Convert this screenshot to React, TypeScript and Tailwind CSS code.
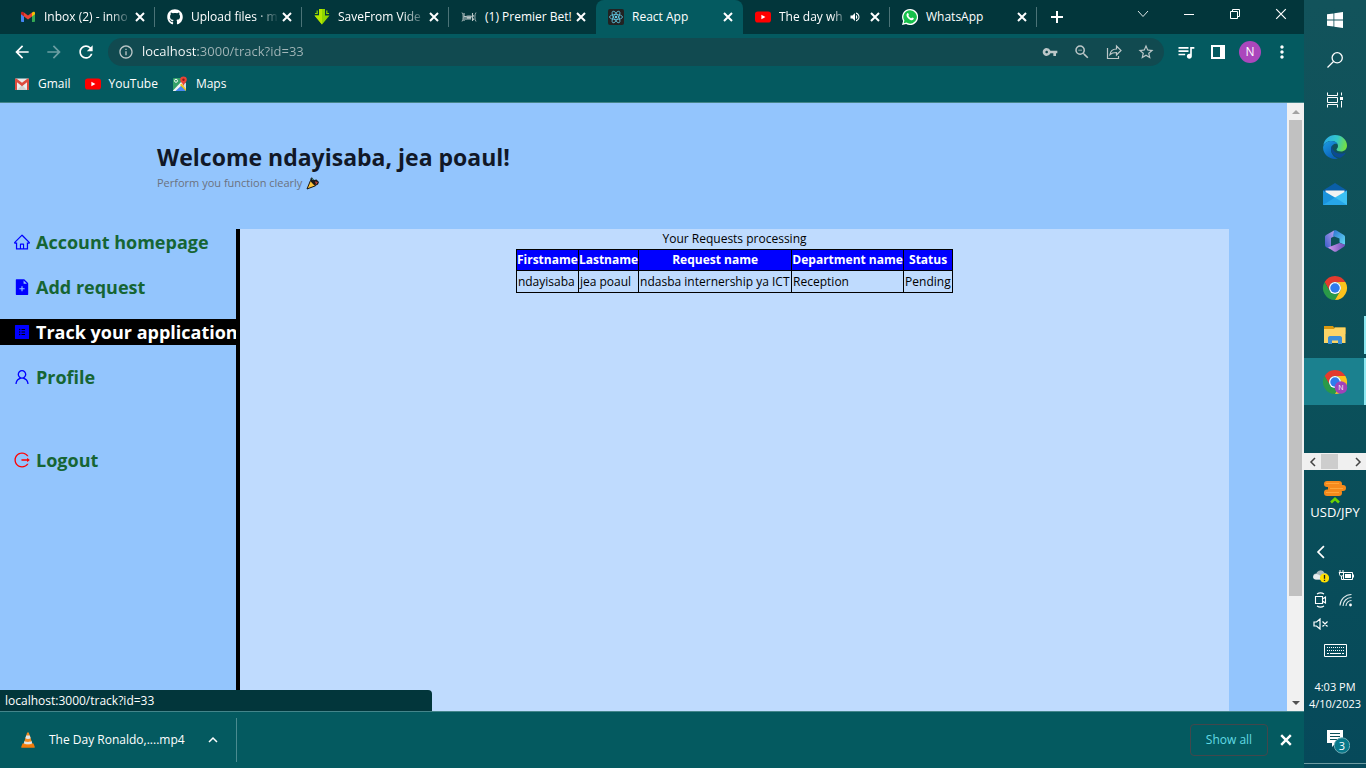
import type { ReactNode } from 'react'
import {
  AiFillFileAdd,
  AiFillProfile,
  AiOutlineHome,
  AiOutlineLogout,
  AiOutlineUser,
} from 'react-icons/ai'
import {
  MdArrowBack,
  MdArrowForward,
  MdInfoOutline,
  MdMoreVert,
  MdOutlineZoomOut,
  MdQueueMusic,
  MdRefresh,
  MdStarBorder,
  MdVolumeUp,
  MdVpnKey,
} from 'react-icons/md'
import { FaGithub } from 'react-icons/fa'

/* ---------- Site and app icons ---------- */

function GmailIcon() {
  return (
    <svg viewBox="0 0 16 16" className="size-4 shrink-0">
      <path d="M1 4v8.2c0 .5.4.8.8.8H4V6.500z" fill="#4285f4" />
      <path d="M15 4v8.200c0 .5-.4.8-.8.8H12V6.500z" fill="#34a853" />
      <path d="M12 3.600 13 2.900c.9-.6 2 0 2 1.100v1.200L12 7.500z" fill="#fbbc04" />
      <path d="M4 3.600 3 2.900C2.100 2.300 1 2.900 1 4v1.200l3 2.300z" fill="#c5221f" />
      <path d="M4 3.600 8 6.600l4-3v3.900l-4 3-4-3z" fill="#ea4335" />
    </svg>
  )
}

function EnvelopeIcon() {
  return (
    <svg viewBox="0 0 16 16" className="size-4 shrink-0">
      <rect x="1" y="2.500" width="14" height="11.500" rx="1" fill="#ececec" />
      <path d="M3 14 8 9l5 5z" fill="#d3d3d3" />
      <path d="M1 3.500v10c0 .3.300.5.6.5H3V6.200l5 4 5-4V14h1.400c.3 0 .6-.2.6-.5v-10c0-.9-1-1.300-1.700-.8L8 6.800 2.700 2.700C2 2.200 1 2.600 1 3.500z" fill="#dd4b3e" />
    </svg>
  )
}

function YouTubeIcon() {
  return (
    <svg viewBox="0 0 16 16" className="size-4 shrink-0">
      <rect x="0" y="2.500" width="16" height="11" rx="2.800" fill="#ff0000" />
      <path d="M6.400 5.700v4.600l4-2.300z" fill="#fff" />
    </svg>
  )
}

function MapsIcon() {
  return (
    <svg viewBox="0 0 16 16" className="size-4 shrink-0">
      <rect x="1" y="2" width="13" height="13" rx="1" fill="#34a069" />
      <path d="m1.500 15 6-6.500L14 15z" fill="#4a89f3" />
      <path d="m1 14.500 9.500-10 2 2L3.500 15H1z" fill="#f3f3f3" />
      <path d="m9 8 5-1v7.500z" fill="#d8dbe0" />
      <path d="m8 9 1.500-1.500L14 13v2z" fill="#fbc515" />
      <circle cx="4" cy="4.800" r="1.500" fill="none" stroke="#fff" strokeWidth=".9" />
      <path d="M11.500.5A3.300 3.300 0 0 0 8.200 3.800c0 2.400 2.600 3.200 3.300 6.200.7-3 3.300-3.800 3.300-6.200A3.300 3.300 0 0 0 11.500.5z" fill="#e94335" />
      <circle cx="11.500" cy="3.800" r="1.200" fill="#8c1d13" />
    </svg>
  )
}

function SaveFromIcon() {
  return (
    <svg viewBox="0 0 16 16" className="size-4 shrink-0">
      <path d="M5 0h6v6.500h4.500L8 15.500.5 6.500H5z" fill="#8fd400" />
      <path d="M5 0h3v15.500L.5 6.500H5z" fill="#b4e600" />
      <path d="M1 4.500h2.800M12.200 4.500H15M3.200 1.500v3M12.800 1.500v3" stroke="#8fd400" strokeWidth="1.200" />
    </svg>
  )
}

function PremierIcon() {
  return (
    <svg viewBox="0 0 16 16" className="size-4 shrink-0" fill="none" stroke="#b9c6c7">
      <path d="M1 3.500c1.500 2 1.500 7 0 9M15 3.500c-1.500 2-1.500 7 0 9" strokeWidth=".8" />
      <path d="M3 4v8M3 7.500h2V11M6 6.500l1 4 1-4 1 4 1-4M11.500 4v8M13 6.500l-2 1.500 2 3" strokeWidth="1.100" />
    </svg>
  )
}

function ReactIcon() {
  return (
    <svg viewBox="0 0 16 16" className="size-4 shrink-0">
      <rect width="16" height="16" rx="2" fill="#222" />
      <g fill="none" stroke="#61c9e4" strokeWidth=".8">
        <ellipse cx="8" cy="8" rx="6.500" ry="2.500" />
        <ellipse cx="8" cy="8" rx="6.500" ry="2.500" transform="rotate(60 8 8)" />
        <ellipse cx="8" cy="8" rx="6.500" ry="2.500" transform="rotate(120 8 8)" />
      </g>
      <circle cx="8" cy="8" r="1.300" fill="#61c9e4" />
    </svg>
  )
}

function WhatsAppIcon() {
  return (
    <svg viewBox="0 0 16 16" className="size-4 shrink-0">
      <path d="M8 0a8 8 0 0 0-6.900 12L0 16l4.100-1.100A8 8 0 1 0 8 0z" fill="#fff" />
      <path d="M8 1.300a6.700 6.700 0 0 0-5.600 10.300l-.7 2.700 2.800-.7A6.700 6.700 0 1 0 8 1.300z" fill="#16c04b" />
      <path d="M5.400 4.200c.4-.2.800-.1.900.2l.6 1.300c.1.300-.5.900-.6 1.100.6 1.200 1.500 2 2.700 2.500.3-.1.900-1 1.100-.9l1.500.7c.4.300 0 1.400-.5 1.700-1.200.8-2.900.1-4.200-.9C5.400 8.700 4.400 7.300 4.500 6c0-.8.500-1.500.9-1.800z" fill="#fff" />
    </svg>
  )
}

function PopperIcon() {
  return (
    <svg viewBox="0 0 14 14" className="size-3.5">
      <path d="M1 13 4.500 4.500 9.500 9.800z" fill="#fcc43c" stroke="#000" strokeWidth=".9" strokeLinejoin="round" />
      <path d="M4.500 4.500C4 2.500 5 1 6 1.500L8 4l2.500-.5L13 6l-1 2.500-2.500 1.300C8 9 5 6.500 4.500 4.500z" fill="#1b1b1b" />
      <path d="m6 2.500 1 1.500" stroke="#3a9b8c" strokeWidth="1" />
      <path d="m9 6 2.500.5M9.500 8l1.500-.5" stroke="#e0483a" strokeWidth="1" />
    </svg>
  )
}

function ConeIcon() {
  return (
    <svg viewBox="0 0 16 16" className="size-4 shrink-0">
      <path d="M2.500 11.500h11l1.300 3.500c.1.500-.1.800-.6.800H1.800c-.5 0-.7-.3-.6-.8z" fill="#f27b0b" />
      <path d="M7.200.5h1.600L12.500 12c-1.500 1.600-7.500 1.600-9 0z" fill="#f58a1f" />
      <path d="m6.200 3.500-.9 2.800c1.500.9 3.900.9 5.400 0l-.9-2.800zM4.500 9l-.7 2.200c1.700 1.400 6.700 1.400 8.400 0L11.500 9c-1.500 1.200-5.500 1.200-7 0z" fill="#dfe6e8" />
    </svg>
  )
}

function ChromeIcon({ badge = false }: { badge?: boolean }) {
  return (
    <svg viewBox="0 0 48 48" className="size-6 overflow-visible">
      <path d="M24 12h20.800A24 24 0 0 0 3.200 12l10.400 18A12 12 0 0 1 24 12z" fill="#e33b2e" />
      <path d="M13.600 30 3.200 12A24 24 0 0 0 24 48l10.400-18a12 12 0 0 1-20.800 0z" fill="#2a9a48" />
      <path d="M34.400 30 24 48a24 24 0 0 0 20.800-36H24a12 12 0 0 1 10.400 18z" fill="#fcc31c" />
      <circle cx="24" cy="24" r="12" fill="#fff" />
      <circle cx="24" cy="24" r="9.500" fill="#2f7bec" />
      {badge && (
        <>
          <circle cx="36" cy="35" r="12.500" fill="#a142b8" />
          <text x="36" y="40" textAnchor="middle" fontSize="14" fill="#fff">N</text>
        </>
      )}
    </svg>
  )
}

function WindowsIcon() {
  return (
    <svg viewBox="0 0 16 16" className="size-4" fill="#fff">
      <path d="M0 2.300 6.500 1.400V7.600H0zM7.300 1.300 16 0v7.600H7.300zM0 8.400h6.500v6.200L0 13.700zM7.300 8.400H16V16l-8.700-1.300z" />
    </svg>
  )
}

function SearchIcon() {
  return (
    <svg viewBox="0 0 16 16" className="size-4" fill="none" stroke="#fff" strokeWidth="1.300">
      <circle cx="10.200" cy="5.800" r="5.100" />
      <path d="M6.500 9.500.5 15.500" />
    </svg>
  )
}

function TaskViewIcon() {
  return (
    <svg viewBox="0 0 16 16" className="size-4" fill="none" stroke="#fff">
      <path d="M.5.500v3h10v-3M.5 15.500v-3h10v3M.5 5.500h10v5H.5zM14.500.500v3M14.500 9v6.500" />
      <path d="M13 5h3v3h-3z" fill="#fff" stroke="none" />
    </svg>
  )
}

function EdgeIcon() {
  return (
    <svg viewBox="0 0 24 24" className="size-6">
      <defs>
        <linearGradient id="edge-top" x1="0" y1="0.300" x2="1" y2="0.500">
          <stop offset="0" stopColor="#29a9e8" />
          <stop offset=".55" stopColor="#33c7c9" />
          <stop offset="1" stopColor="#76e03f" />
        </linearGradient>
        <linearGradient id="edge-left" x1="0" y1="0" x2=".6" y2="1">
          <stop offset="0" stopColor="#1b9de2" />
          <stop offset="1" stopColor="#0b5fb8" />
        </linearGradient>
      </defs>
      <path d="M.3 10.500C1.200 4.500 6 0 12 0c7 0 12 5 12 10.500 0 3.700-2.700 6-6 6-2.700 0-4.500-.9-4.500-2 0-.7 1.500-1.300 1.500-3.500C15 8 12 6 8.500 6 5 6 1.500 8 .3 10.500z" fill="url(#edge-top)" />
      <path d="M.1 12C.8 8.300 4.500 6 8.500 6c2.800 0 5 1.200 6 3-3.500-1.300-6.500 1.500-6.500 5.500 0 4.500 3 8 7 9-1 .3-2 .5-3 .5C5.500 24-.4 18.500.1 12z" fill="url(#edge-left)" />
      <path d="M9.500 10.300C7.500 12 7.700 16 9.500 18.500c2 2.700 5.500 5 8.500 3.900 1.800-.9 3.500-2.500 4.400-4.100.3-.5-.1-.9-.6-.6-3.300 1.700-8.300 1-10.800-1.700-1.500-1.600-1.900-3.700-1.500-5.700z" fill="#0c4a92" />
    </svg>
  )
}

function MailIcon() {
  return (
    <svg viewBox="0 0 24 22" className="h-[22px] w-6">
      <path d="M0 7.500 12 0l12 7.500V14H0z" fill="#0a5ea8" />
      <path d="M2.500 7.500h19V14l-9.500 3-9.500-3z" fill="#f2f2f2" />
      <path d="M0 7.500 12 14.500V22H0z" fill="#1a93dc" />
      <path d="M24 7.500 12 14.500V22h12z" fill="#3cbff2" />
      <path d="m0 22 12-7.500L24 22z" fill="#27a6e8" />
    </svg>
  )
}

function OfficeIcon() {
  return (
    <svg viewBox="0 0 20 22" className="h-[22px] w-5">
      <defs>
        <linearGradient id="office-a" x1="0" y1="1" x2="1" y2="0">
          <stop offset="0" stopColor="#3658c8" />
          <stop offset="1" stopColor="#b9a3ee" />
        </linearGradient>
        <linearGradient id="office-b" x1="0" y1="0" x2="1" y2="1">
          <stop offset="0" stopColor="#2f73cf" />
          <stop offset="1" stopColor="#62dcf5" />
        </linearGradient>
        <linearGradient id="office-c" x1="0" y1="0" x2="1" y2="0">
          <stop offset="0" stopColor="#d39aee" />
          <stop offset="1" stopColor="#6a4fb8" />
        </linearGradient>
      </defs>
      <path d="M9 .5 1.500 4.700C.5 5.300 0 6 0 7v8c0 1.200.7 2 1.700 2.500L5 19l1-1.500V8l3.500-2z" fill="url(#office-a)" />
      <path d="M9 .5c.8-.4 1.700-.4 2.500 0l7 4.200c1 .6 1.500 1.300 1.500 2.300v8l-5.500-2.500V8.500L8 6z" fill="url(#office-b)" />
      <path d="M3 17.500 14.500 13l5.500 1.500c0 1.200-.5 2-1.500 2.600l-7 4.300c-.8.5-1.700.5-2.500 0z" fill="url(#office-c)" />
    </svg>
  )
}

function FolderIcon() {
  return (
    <svg viewBox="0 0 22 18" className="h-[18px] w-[22px]">
      <path d="M0 0h9l1 1.500h11.500V8H0z" fill="#d9990f" />
      <path d="M0 3h10l1-1.500h10.500V17H0z" fill="#fcd566" />
      <path d="M4 18v-6c0-1 .7-2 2-2h10c1.300 0 2 1 2 2v6h-4v-3.500H8V18z" fill="#3a8ed8" />
    </svg>
  )
}

function CoinsIcon() {
  return (
    <svg viewBox="0 0 24 24" className="size-6">
      <g fill="#f58a1c">
        <rect x="1" y="1" width="18" height="6" rx="3" />
        <rect x="5" y="5" width="18" height="6" rx="3" />
        <rect x="1" y="9.500" width="18" height="6.500" rx="3" />
        <path d="M5 4h13v9H5z" />
      </g>
      <path d="M3 3.500h13M7 8.500h13M3 12.500h13" stroke="#ffa63a" strokeWidth="1.200" />
      <path d="m8 22.500 4-3.700 4 3.700" fill="none" stroke="#6ed400" strokeWidth="2.600" />
    </svg>
  )
}

function CloudIcon() {
  return (
    <svg viewBox="0 0 16 14" className="h-3.5 w-4">
      <path d="M3 10.500a3 3 0 0 1 .4-6A4.300 4.300 0 0 1 11.500 4 3.300 3.300 0 0 1 12 10.500z" fill="#a9b9bd" />
      <path d="M1 10a3 3 0 0 1 2.500-5C5 5 10 8 11 10.500H3c-.8 0-1.500-.2-2-.5z" fill="#e8eef0" />
      <circle cx="11.500" cy="9" r="4.600" fill="#ffe000" />
      <path d="M11.500 6v3.700M11.500 10.700v1.200" stroke="#222" strokeWidth="1.300" />
    </svg>
  )
}

function BatteryIcon() {
  return (
    <svg viewBox="0 0 16 14" className="h-3.5 w-4" fill="none" stroke="#fff">
      <path d="M5.500 3.500h9v7h-9zM15.500 5.500v3M2 1v2M5 1v2M.8 3.500h5M1.500 3.500v2c0 1 .8 1.500 2 1.500s2-.5 2-1.500v-2M3.500 7v3.500h2" />
      <path d="M7 5h6v4H7z" fill="#fff" stroke="none" />
    </svg>
  )
}

function MeetIcon() {
  return (
    <svg viewBox="0 0 16 16" className="size-4" fill="none" stroke="#fff" strokeWidth="1.100">
      <path d="M2.500 4.500h7v7h-7zM9.500 7l3-2v6l-3-2M4 2c2-1.300 5-1.300 7 0M4 14c2 1.300 5 1.300 7 0" />
    </svg>
  )
}

function WifiIcon() {
  return (
    <svg viewBox="0 0 14 14" className="size-3.5" fill="none" stroke="#dfe9ea" strokeWidth="1.100">
      <path d="M1 12.500A11.500 11.500 0 0 1 12.500 1.500M4 13A8.500 8.500 0 0 1 12.500 4.500M7 13a5.500 5.500 0 0 1 5.500-5.500" />
      <circle cx="11.500" cy="12" r="1.400" fill="#fff" stroke="none" />
    </svg>
  )
}

function MutedIcon() {
  return (
    <svg viewBox="0 0 16 12" className="h-3 w-4" fill="none" stroke="#fff" strokeWidth="1.200">
      <path d="M1 4h2.500L7 1v10L3.500 8H1zM9.500 3.500l5 5M14.500 3.500l-5 5" />
    </svg>
  )
}

function KeyboardIcon() {
  return (
    <svg viewBox="0 0 23 13" className="h-[13px] w-[23px]" fill="none" stroke="#fff">
      <path d="M.5.5h22v12H.5z" />
      <path d="M3 3.500h17M3 6.500h17" strokeDasharray="1 1" />
      <path d="M3 9.500h2M6 9.500h11M18 9.500h2" />
    </svg>
  )
}

function CrossIcon({ size = 'size-2.5', weight = 2 }: { size?: string; weight?: number }) {
  return (
    <svg viewBox="0 0 10 10" className={size} fill="none" stroke="#fff" strokeWidth={weight}>
      <path d="m1 1 8 8M9 1 1 9" />
    </svg>
  )
}

function Chevron({ className, points, color = '#fff' }: { className: string; points: string; color?: string }) {
  return (
    <svg viewBox="0 0 12 12" className={className} fill="none" stroke={color} strokeWidth="1.500">
      <path d={points} />
    </svg>
  )
}

function Triangle({ up = false }: { up?: boolean }) {
  return (
    <svg viewBox="0 0 8 4" className="h-1 w-2">
      <path d={up ? 'M0 4 4 0l4 4z' : 'M0 0h8L4 4z'} fill={up ? '#a3a3a3' : '#505050'} />
    </svg>
  )
}

/* ---------- Browser ---------- */

type Tab = {
  title: string
  icon: ReactNode
  active?: boolean
  audio?: boolean
  divider?: boolean
  faded?: boolean
}

const tabs: Tab[] = [
  { title: 'Inbox (2) - inno', icon: <GmailIcon />, divider: true, faded: true },
  { title: 'Upload files · m', icon: <FaGithub className="size-4 shrink-0" />, divider: true, faded: true },
  { title: 'SaveFrom Vide', icon: <SaveFromIcon />, divider: true, faded: true },
  { title: '(1) Premier Bet!', icon: <PremierIcon /> },
  { title: 'React App', icon: <ReactIcon />, active: true },
  { title: 'The day wh', icon: <YouTubeIcon />, audio: true, divider: true, faded: true },
  { title: 'WhatsApp', icon: <WhatsAppIcon />, divider: true },
]

function TabStrip() {
  return (
    <div className="flex h-[34px] bg-[#02363b] pl-2">
      <div role="tablist" className="flex min-w-0 flex-1">
        {tabs.map((tab) => (
          <div
            key={tab.title}
            className={
              tab.active
                ? 'flex w-[147px] min-w-0 items-center rounded-t-lg bg-[#045a60] pl-3'
                : 'flex w-[147px] min-w-0 items-center pl-3'
            }
          >
            {tab.icon}
            <button
              role="tab"
              aria-selected={!!tab.active}
              className={
                tab.faded
                  ? 'ml-2 min-w-0 flex-1 mask-r-from-75% text-left text-xs whitespace-nowrap'
                  : 'ml-2 min-w-0 flex-1 text-left text-xs whitespace-nowrap'
              }
            >
              {tab.title}
            </button>
            {tab.audio && <MdVolumeUp className="mr-1.5 size-3 shrink-0" />}
            <button aria-label={`Close ${tab.title}`} className="mr-1.5 flex w-4 shrink-0 justify-center">
              <CrossIcon />
            </button>
            <span className={tab.divider ? 'h-5 w-px bg-[#4b7377]' : 'h-5 w-px'} />
          </div>
        ))}
        <button aria-label="New tab" className="flex w-10 items-center justify-center">
          <svg viewBox="0 0 12 12" className="size-3" stroke="#fff" strokeWidth="2">
            <path d="M6 0v12M0 6h12" />
          </svg>
        </button>
      </div>
      <div className="flex h-7 items-center">
        <button aria-label="Search tabs" className="flex w-[46px] justify-center">
          <svg viewBox="0 0 12 8" className="h-2 w-3" fill="none" stroke="#dfe7e8">
            <path d="m1 1 5 5.500L11 1" />
          </svg>
        </button>
        <button aria-label="Minimize" className="flex w-[46px] justify-center">
          <span className="h-px w-2.5 bg-white" />
        </button>
        <button aria-label="Restore" className="flex w-[46px] justify-center">
          <svg viewBox="0 0 10 10" className="size-2.5" fill="none" stroke="#fff">
            <path d="M.5 2.500h7v7h-7zM2.500 2.500v-2h7v7h-2" />
          </svg>
        </button>
        <button aria-label="Close window" className="flex w-[46px] justify-center">
          <CrossIcon size="size-3" weight={1} />
        </button>
      </div>
    </div>
  )
}

function IconButton({ label, children }: { label: string; children: ReactNode }) {
  return (
    <button aria-label={label} className="flex w-8 shrink-0 items-center justify-center">
      {children}
    </button>
  )
}

function Toolbar() {
  return (
    <div className="flex h-9 items-center px-1.5">
      <IconButton label="Back"><MdArrowBack className="size-5" /></IconButton>
      <IconButton label="Forward"><MdArrowForward className="size-5 text-[#6c9ea2]" /></IconButton>
      <IconButton label="Reload"><MdRefresh className="size-5" /></IconButton>
      <div className="mx-1.5 flex h-7 min-w-0 flex-1 items-center rounded-full bg-[#114a50] pr-0.5 pl-2.5 text-[#bcc7c8]">
        <MdInfoOutline className="size-4 shrink-0" />
        <input
          aria-label="Address"
          defaultValue="localhost:3000/track?id=33"
          className="ml-2 min-w-0 flex-1 bg-[linear-gradient(90deg,#ffffff_56px,#a3b6b8_56px)] bg-clip-text text-[13px] text-transparent outline-none"
        />
        <IconButton label="Passwords"><MdVpnKey className="size-4" /></IconButton>
        <IconButton label="Zoom"><MdOutlineZoomOut className="size-[18px]" /></IconButton>
        <IconButton label="Share">
          <svg viewBox="0 0 16 16" className="size-4" fill="none" stroke="currentColor" strokeWidth="1.200">
            <path d="M1.500 4v10.500h11V12M4 10.500c.5-3.500 3-5.500 6.500-5.500V2l4.500 4.500-4.500 4.500V8.500C8 8.500 5.500 9 4 10.500z" />
          </svg>
        </IconButton>
        <IconButton label="Bookmark"><MdStarBorder className="size-[18px]" /></IconButton>
      </div>
      <IconButton label="Media controls"><MdQueueMusic className="size-5" /></IconButton>
      <IconButton label="Side panel">
        <svg viewBox="0 0 14 14" className="size-3.5">
          <path d="M1 1h12v12H1z" fill="none" stroke="#fff" strokeWidth="2" />
          <path d="M9 1h4v12H9z" fill="#fff" />
        </svg>
      </IconButton>
      <IconButton label="Account">
        <span className="flex size-[22px] items-center justify-center rounded-full bg-[#ab47bc] text-xs">N</span>
      </IconButton>
      <IconButton label="Menu"><MdMoreVert className="size-5" /></IconButton>
    </div>
  )
}

const bookmarks = [
  { label: 'Gmail', icon: <EnvelopeIcon /> },
  { label: 'YouTube', icon: <YouTubeIcon /> },
  { label: 'Maps', icon: <MapsIcon /> },
]

function Bookmarks() {
  return (
    <nav aria-label="Bookmarks" className="flex h-[33px] items-center gap-3.5 border-b border-[#44858a] pb-1 pl-3.5 text-xs">
      {bookmarks.map((item) => (
        <a key={item.label} href="#" className="flex items-center gap-2">
          {item.icon}
          {item.label}
        </a>
      ))}
    </nav>
  )
}

/* ---------- Web page ---------- */

const links = [
  { label: 'Account homepage', icon: <AiOutlineHome /> },
  { label: 'Add request', icon: <AiFillFileAdd /> },
  { label: 'Track your application', icon: <AiFillProfile />, active: true },
  { label: 'Profile', icon: <AiOutlineUser /> },
]

const columns = [
  { title: 'Firstname', width: 'w-[62px]' },
  { title: 'Lastname', width: 'w-[59px]' },
  { title: 'Request name', width: 'w-[153px]' },
  { title: 'Department name', width: 'w-[112px]' },
  { title: 'Status', width: 'w-[49px]' },
]

const requests = [['ndayisaba', 'jea poaul', 'ndasba internership ya ICT', 'Reception', 'Pending']]

function Sidebar() {
  return (
    <nav aria-label="Account" className="w-[236px] shrink-0 text-lg font-bold text-[#166534]">
      <ul className="flex flex-col gap-[19px]">
        {links.map((link) => (
          <li key={link.label}>
            <a
              href="#"
              className={
                link.active
                  ? 'flex h-[26px] items-center gap-[5px] bg-black pl-[13px] whitespace-nowrap text-white'
                  : 'flex h-[26px] items-center gap-[5px] pl-[13px] whitespace-nowrap'
              }
            >
              <span className="text-[blue]">{link.icon}</span>
              {link.label}
            </a>
          </li>
        ))}
      </ul>
      <a href="#" className="mt-[57px] flex h-[26px] items-center gap-[5px] pl-[13px]">
        <AiOutlineLogout className="text-[red]" />
        Logout
      </a>
    </nav>
  )
}

function RequestTable() {
  return (
    <table className="mx-auto border-collapse text-xs whitespace-nowrap">
      <caption className="h-5 leading-5">Your Requests processing</caption>
      <thead>
        <tr className="h-[21px] bg-[blue] text-white">
          {columns.map((column) => (
            <th key={column.title} className={`border border-black p-0 text-center font-bold ${column.width}`}>
              {column.title}
            </th>
          ))}
        </tr>
      </thead>
      <tbody>
        {requests.map((row) => (
          <tr key={row[0]} className="h-[22px]">
            {row.map((cell) => (
              <td key={cell} className="border border-black p-0 pl-px">{cell}</td>
            ))}
          </tr>
        ))}
      </tbody>
    </table>
  )
}

function Page() {
  return (
    <div className="relative flex min-h-0 flex-1 bg-[#93c5fd] text-black">
      <div className="flex min-w-0 flex-1 flex-col">
        <header className="pt-[38px] pb-9 pl-[157px]">
          <h1 className="text-[23px] leading-8 font-bold text-[#111827]">Welcome ndayisaba, jea poaul!</h1>
          <p className="flex items-center gap-1 text-[11px] leading-5 text-[#6b7280]">
            Perform you function clearly <PopperIcon />
          </p>
        </header>
        <div className="flex flex-1 pr-[58px]">
          <Sidebar />
          <main className="flex-1 border-l-4 border-black bg-[#bfdbfe]">
            <RequestTable />
          </main>
        </div>
      </div>
      <div className="flex w-[17px] flex-col items-center bg-[#f1f1f1]">
        <button aria-label="Scroll up" className="flex h-[17px] items-center"><Triangle up /></button>
        <div className="flex w-[13px] flex-1 flex-col">
          <div className="h-[83%] bg-[#c1c1c1]" />
        </div>
        <button aria-label="Scroll down" className="flex h-[17px] items-center"><Triangle /></button>
      </div>
      <div className="absolute bottom-0 left-0 w-[432px] rounded-tr bg-[#02363b] px-[5px] text-xs leading-[21px] text-white">
        localhost:3000/track?id=33
      </div>
    </div>
  )
}

function DownloadBar() {
  return (
    <div className="flex h-[57px] items-center border-t border-[#44858a] text-xs">
      <div className="flex h-11 w-[237px] items-center border-r border-[#4b8b90] pl-5">
        <ConeIcon />
        <span className="ml-[13px] flex-1 whitespace-nowrap">The Day Ronaldo,....mp4</span>
        <button aria-label="Download options" className="mr-[17px]">
          <Chevron className="size-3" points="m2 8 4-4 4 4" />
        </button>
      </div>
      <button className="ml-auto h-8 w-[78px] rounded border border-[#42474c] text-[#62dbe4]">Show all</button>
      <button aria-label="Close downloads" className="mx-3"><CrossIcon size="size-3" /></button>
    </div>
  )
}

/* ---------- Taskbar ---------- */

const systemButtons = [
  { label: 'Start', icon: <WindowsIcon /> },
  { label: 'Search', icon: <SearchIcon /> },
  { label: 'Task view', icon: <TaskViewIcon /> },
]

const apps = [
  { label: 'Edge', icon: <EdgeIcon />, style: '' },
  { label: 'Mail', icon: <MailIcon />, style: '' },
  { label: 'Office', icon: <OfficeIcon />, style: '' },
  { label: 'Chrome', icon: <ChromeIcon />, style: '' },
  { label: 'File Explorer', icon: <FolderIcon />, style: '', mark: 'h-[38px] w-0.5 bg-[#8fe9f2]' },
  { label: 'Chrome, profile N', icon: <ChromeIcon badge />, style: 'bg-[#1b818f]', mark: 'h-full w-0.5 bg-[#8fe9f2]' },
]

function Taskbar() {
  return (
    <aside className="flex w-[62px] shrink-0 flex-col bg-linear-to-b from-[#12535b] via-[#0b505a] to-[#06495a]">
      {systemButtons.map((item) => (
        <button key={item.label} aria-label={item.label} className="flex h-10 items-center justify-center">
          {item.icon}
        </button>
      ))}
      <div className="mt-[3px] flex flex-col">
        {apps.map((app) => (
          <button key={app.label} aria-label={app.label} className={`flex h-[47px] items-center ${app.style}`}>
            <span className="ml-0.5 flex flex-1 justify-center">{app.icon}</span>
            <span className={app.mark ?? 'w-0.5'} />
          </button>
        ))}
      </div>
      <div className="mt-auto flex h-[17px] items-center bg-[#f0f0f0]">
        <button aria-label="Scroll left" className="flex w-[17px] justify-center">
          <Chevron className="size-3" points="M8 2 4 6l4 4" color="#444" />
        </button>
        <span className="h-[15px] w-[17px] bg-[#cdcdcd]" />
        <button aria-label="Scroll right" className="ml-auto flex w-[17px] justify-center">
          <Chevron className="size-3" points="m4 2 4 4-4 4" color="#444" />
        </button>
      </div>
      <button className="flex flex-col items-center pt-2.5 text-[13px] leading-4">
        <CoinsIcon />
        USD/JPY
      </button>
      <button aria-label="Hidden icons" className="mt-[25px] flex pl-2.5">
        <Chevron className="size-3.5" points="M8.500 1 3.500 6l5 5" />
      </button>
      <div className="mt-[5px] grid grid-cols-2 items-center justify-items-center pr-2 pl-1">
        <span className="flex h-6 items-center"><CloudIcon /></span>
        <span className="flex h-6 items-center"><BatteryIcon /></span>
        <span className="flex h-6 items-center"><MeetIcon /></span>
        <span className="flex h-6 items-center"><WifiIcon /></span>
        <span className="flex h-6 items-center"><MutedIcon /></span>
      </div>
      <button aria-label="Touch keyboard" className="mt-px flex h-[26px] items-center justify-center"><KeyboardIcon /></button>
      <div className="mt-[15px] text-center text-[11px] leading-[17px]">
        <div>4:03 PM</div>
        <div>4/10/2023</div>
      </div>
      <button aria-label="Notifications" className="mt-2 flex h-[43px] items-center justify-center pl-1.5">
        <svg viewBox="0 0 24 24" className="size-6">
          <path d="M1 0h16v13H10l-4 4v-4H1z" fill="#fff" />
          <path d="M4 3.500h10M4 6.500h10M4 9.500h7" stroke="#0b505a" />
          <circle cx="16" cy="15.500" r="7.700" fill="#08788a" stroke="#6fa9b2" />
          <text x="16" y="19.500" textAnchor="middle" fontSize="11" fill="#fff">3</text>
        </svg>
      </button>
      <div className="mb-1 border-t border-[#6c9ba2]" />
    </aside>
  )
}

export default function App() {
  return (
    <div className="flex h-screen overflow-hidden bg-[#045a60] font-['Open_Sans','Noto_Sans',sans-serif] text-white">
      <div className="flex min-w-0 flex-1 flex-col">
        <TabStrip />
        <Toolbar />
        <Bookmarks />
        <Page />
        <DownloadBar />
      </div>
      <Taskbar />
    </div>
  )
}
